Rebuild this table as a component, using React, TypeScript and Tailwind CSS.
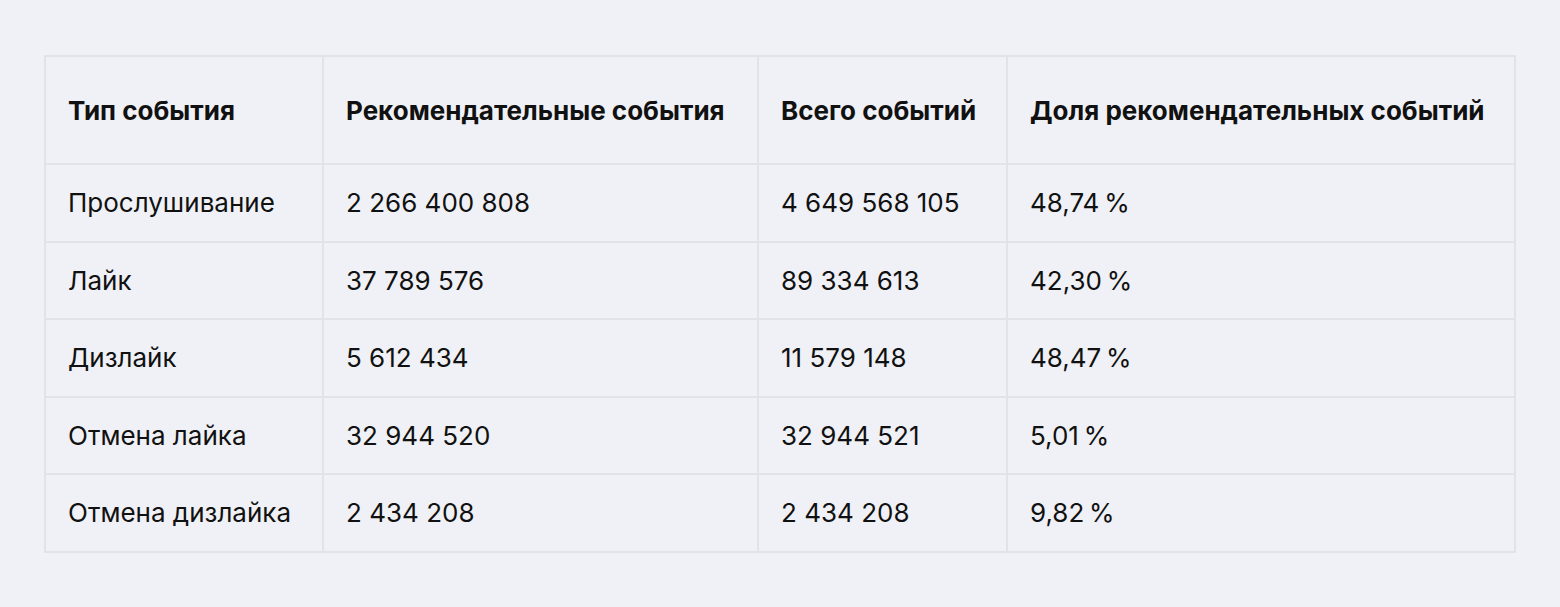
const rows = [
  ['Прослушивание', '2 266 400 808', '4 649 568 105', '48,74\u202F%'],
  ['Лайк', '37 789 576', '89 334 613', '42,30\u202F%'],
  ['Дизлайк', '5 612 434', '11 579 148', '48,47\u202F%'],
  ['Отмена лайка', '32 944 520', '32 944 521', '5,01\u202F%'],
  ['Отмена дизлайка', '2 434 208', '2 434 208', '9,82\u202F%'],
];

const headers = ['Тип события', 'Рекомендательные события', 'Всего событий', 'Доля рекомендательных событий'];
const widths = ['w-[278px]', 'w-[435px]', 'w-[249px]', 'w-[508px]'];

export default function App() {
  return (
    <div className="min-h-[607px] w-full bg-[#f0f1f6] pt-[55px] pl-[44px] font-['Inter',sans-serif] text-[#111]">
      <table className="w-[1470px] table-fixed border-collapse border-2 border-[#e2e3e9] text-[26px]">
        <thead>
          <tr className="h-[108px]">
            {headers.map((h, i) => (
              <th key={h} className={`${widths[i]} border-2 border-[#e2e3e9] pl-[22px] text-left font-bold`}>
                {h}
              </th>
            ))}
          </tr>
        </thead>
        <tbody>
          {rows.map((r) => (
            <tr key={r[0]} className="h-[77.5px]">
              {r.map((c, i) => (
                <td key={i} className="border-2 border-[#e2e3e9] pl-[22px]">
                  {c}
                </td>
              ))}
            </tr>
          ))}
        </tbody>
      </table>
    </div>
  );
}
